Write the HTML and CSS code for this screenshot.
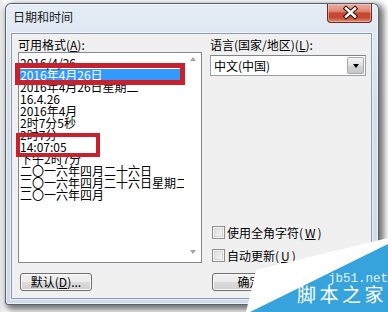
FILE: index.html
```html
<!DOCTYPE html>
<html lang="zh-CN">
<head>
<meta charset="utf-8">
<title>日期和时间</title>
<link rel="stylesheet" href="styles.css">
</head>
<body>
<div class="screen">
  <div class="window">
    <div class="titlebar">
      <span class="title">日期和时间</span>
      <div class="close">
        <svg width="45" height="19" viewBox="0 0 45 19">
          <path d="M18 5.5 L27 13.5 M27 5.5 L18 13.5" stroke="#3c1510" stroke-width="4.6" stroke-linecap="square" fill="none"/>
          <path d="M18 5.5 L27 13.5 M27 5.5 L18 13.5" stroke="#ffffff" stroke-width="2.4" stroke-linecap="square" fill="none"/>
        </svg>
      </div>
    </div>
    <div class="client">
      <div class="col col-left">
        <div class="label">可用格式(<u>A</u>):</div>
        <div class="listbox">
          <div class="rows">
            <div class="row">2016/4/26</div>
            <div class="row sel"><span>2016年4月26日</span></div>
            <div class="row">2016年4月26日星期二</div>
            <div class="row">16.4.26</div>
            <div class="row">2016年4月</div>
            <div class="row">2时7分5秒</div>
            <div class="row">2时7分</div>
            <div class="row">14:07:05</div>
            <div class="row">下午2时7分</div>
            <div class="row">二〇一六年四月二十六日</div>
            <div class="row">二〇一六年四月二十六日星期二</div>
            <div class="row">二〇一六年四月</div>
          </div>
          <div class="vscroll">
            <span class="arrow up"></span>
            <span class="arrow down"></span>
          </div>
        </div>
        <button class="btn btn-default">默认(<u>D</u>)...</button>
      </div>
      <div class="col col-right">
        <div class="label">语言(国家/地区)(<u>L</u>):</div>
        <div class="combo">
          <span class="combo-text">中文(中国)</span>
          <span class="combo-btn"><span class="tri"></span></span>
        </div>
        <div class="checks">
          <label class="check"><span class="box"></span>使用全角字符(<u>W</u>)</label>
          <label class="check"><span class="box"></span>自动更新(<u>U</u>)</label>
        </div>
        <button class="btn btn-ok">确定</button>
      </div>
    </div>
  </div>

  <div class="mark mark-1"></div>
  <div class="mark mark-2"></div>

  <div class="watermark">
    <svg width="148" height="76" viewBox="0 0 148 76">
      <polygon points="16,34 148,2 148,76 6,76" fill="#ffffff"/>
      <polygon points="10,76 148,8 148,76" fill="#36a3dc"/>
    </svg>
    <span class="wm-url">jb51.net</span>
    <span class="wm-name">脚本之家</span>
  </div>
</div>
</body>
</html>
```

FILE: styles.css
```css
* { box-sizing: border-box; }

body {
  margin: 0;
  background: #ffffff;
  font-family: "Noto Sans CJK SC", "Liberation Sans", sans-serif;
  font-size: 12px;
  color: #000;
}

.screen {
  position: relative;
  width: 388px;
  height: 312px;
  overflow: hidden;
  padding: 3px 0 0 5px;
  background: linear-gradient(to right, #e9e9e9, #ffffff 6px);
}

.window {
  width: 374px;
  height: 302px;
  border: 1px solid rgba(45, 55, 68, 0.75);
  border-radius: 6px 6px 3px 3px;
  background: linear-gradient(to bottom, #e4ecf5 0%, #d2deeb 40%, #cfdbe9 100%);
  box-shadow: 3px 3px 6px 2px rgba(0, 0, 0, 0.55), inset 0 0 0 1px rgba(255, 255, 255, 0.55);
  display: flex;
  flex-direction: column;
  padding: 0 6px 5px 5px;
}

.titlebar {
  height: 29px;
  display: flex;
  justify-content: space-between;
  align-items: flex-start;
}

.title {
  margin: 6px 0 0 2px;
  line-height: 14px;
  font-size: 12px;
  color: #1a1a1a;
}

.close {
  width: 45px;
  height: 19px;
  border: 1px solid #6a2a22;
  border-top: none;
  border-radius: 0 0 4px 4px;
  background: linear-gradient(to bottom, #eab0a6 0%, #dc8777 40%, #c8452f 52%, #c24a33 75%, #de8c73 100%);
  box-shadow: inset 0 0 0 1px rgba(255, 220, 210, 0.45);
}

.close svg { display: block; margin-top: -1px; }

.client {
  flex: 1;
  border: 1px solid #8c9db2;
  box-shadow: 0 0 0 1px rgba(255, 255, 255, 0.5);
  background: #f0f0f0;
  display: grid;
  grid-template-columns: 184px 156px;
  column-gap: 8px;
  align-content: start;
  padding: 4px 0 0 6px;
}

.col { display: flex; flex-direction: column; }

.label {
  height: 14px;
  line-height: 14px;
  white-space: nowrap;
}

u { text-decoration: underline; text-underline-offset: 1px; }

/* list box */
.listbox {
  height: 211px;
  border: 1px solid #828790;
  background: #fff;
  display: flex;
  overflow: hidden;
}

.rows {
  flex: 1;
  min-width: 0;
  overflow: hidden;
  padding-top: 4px;
}

.row {
  height: 12px;
  line-height: 12px;
  padding-left: 1px;
  white-space: nowrap;
}

.row.sel {
  margin: 0 1px 0 1px;
  padding-left: 0;
  background: #3399ff;
  color: #fff;
}

.vscroll {
  width: 17px;
  flex: none;
  background: #fff;
  display: flex;
  flex-direction: column;
  justify-content: space-between;
  align-items: center;
  padding: 4px 0 8px;
}

.arrow {
  width: 0;
  height: 0;
  border-left: 3.5px solid transparent;
  border-right: 3.5px solid transparent;
}
.arrow.up { border-bottom: 4px solid #a4a4a4; }
.arrow.down { border-top: 4px solid #a4a4a4; }

/* buttons */
.btn {
  height: 18px;
  margin-top: 10px;
  margin-left: 2px;
  padding: 0;
  font: inherit;
  font-size: 12px;
  line-height: 16px;
  color: #000;
  border: 1px solid #707070;
  border-radius: 3px;
  background: linear-gradient(to bottom, #f2f2f2 0%, #ebebeb 50%, #dddddd 50%, #cfcfcf 100%);
  box-shadow: inset 0 0 0 1px #fbfbfb;
  text-align: center;
}

.btn-default { width: 72px; }
.btn-ok { width: 75px; }

/* combo */
.combo {
  margin-top: 3px;
  height: 21px;
  width: 156px;
  border: 1px solid #9a9ea6;
  border-top-color: #7f838b;
  background: #fff;
  display: flex;
  align-items: stretch;
}

.combo-text {
  flex: 1;
  padding-left: 3px;
  line-height: 19px;
  font-size: 12px;
}

.combo-btn {
  width: 17px;
  margin: 1px 1px 1px 0;
  border: 1px solid #a9a9a9;
  border-radius: 2px;
  background: linear-gradient(to bottom, #f4f4f4, #e1e1e1 50%, #d2d2d2 51%, #c9c9c9);
  display: flex;
  align-items: center;
  justify-content: center;
}

.tri {
  width: 0;
  height: 0;
  border-left: 3.5px solid transparent;
  border-right: 3.5px solid transparent;
  border-top: 4px solid #000;
}

/* checkboxes */
.checks {
  margin-top: auto;
  display: flex;
  flex-direction: column;
  gap: 7px;
}

.check {
  height: 16px;
  display: flex;
  align-items: center;
  gap: 2px;
  padding-left: 2px;
  white-space: nowrap;
}

.box {
  width: 13px;
  height: 13px;
  border: 1px solid #8e8f8f;
  background: linear-gradient(135deg, #dcdcdc, #f6f6f6);
  box-shadow: inset 0 0 0 1px #f4f4f4, inset 0 0 0 2px #d8d8d8;
}

/* annotation boxes */
.mark {
  position: absolute;
  border-style: solid;
  border-color: #c8212b;
}

.mark-1 {
  left: 15px;
  top: 63px;
  width: 170px;
  height: 22px;
  border-width: 5px;
}

.mark-2 {
  left: 16px;
  top: 133px;
  width: 84px;
  height: 24px;
  border-width: 4px;
}

/* watermark */
.watermark {
  position: absolute;
  left: 240px;
  top: 236px;
  width: 148px;
  height: 76px;
}

.watermark svg { display: block; }

.wm-url {
  position: absolute;
  left: 88px;
  top: 36px;
  font-family: "Liberation Mono", monospace;
  font-size: 12.5px;
  line-height: 14px;
  color: #e2f2fb;
}

.wm-name {
  position: absolute;
  left: 57px;
  top: 47px;
  font-family: "Noto Sans CJK SC", sans-serif;
  font-size: 19px;
  line-height: 22px;
  letter-spacing: 3.5px;
  color: #ffffff;
  white-space: nowrap;
}
```
